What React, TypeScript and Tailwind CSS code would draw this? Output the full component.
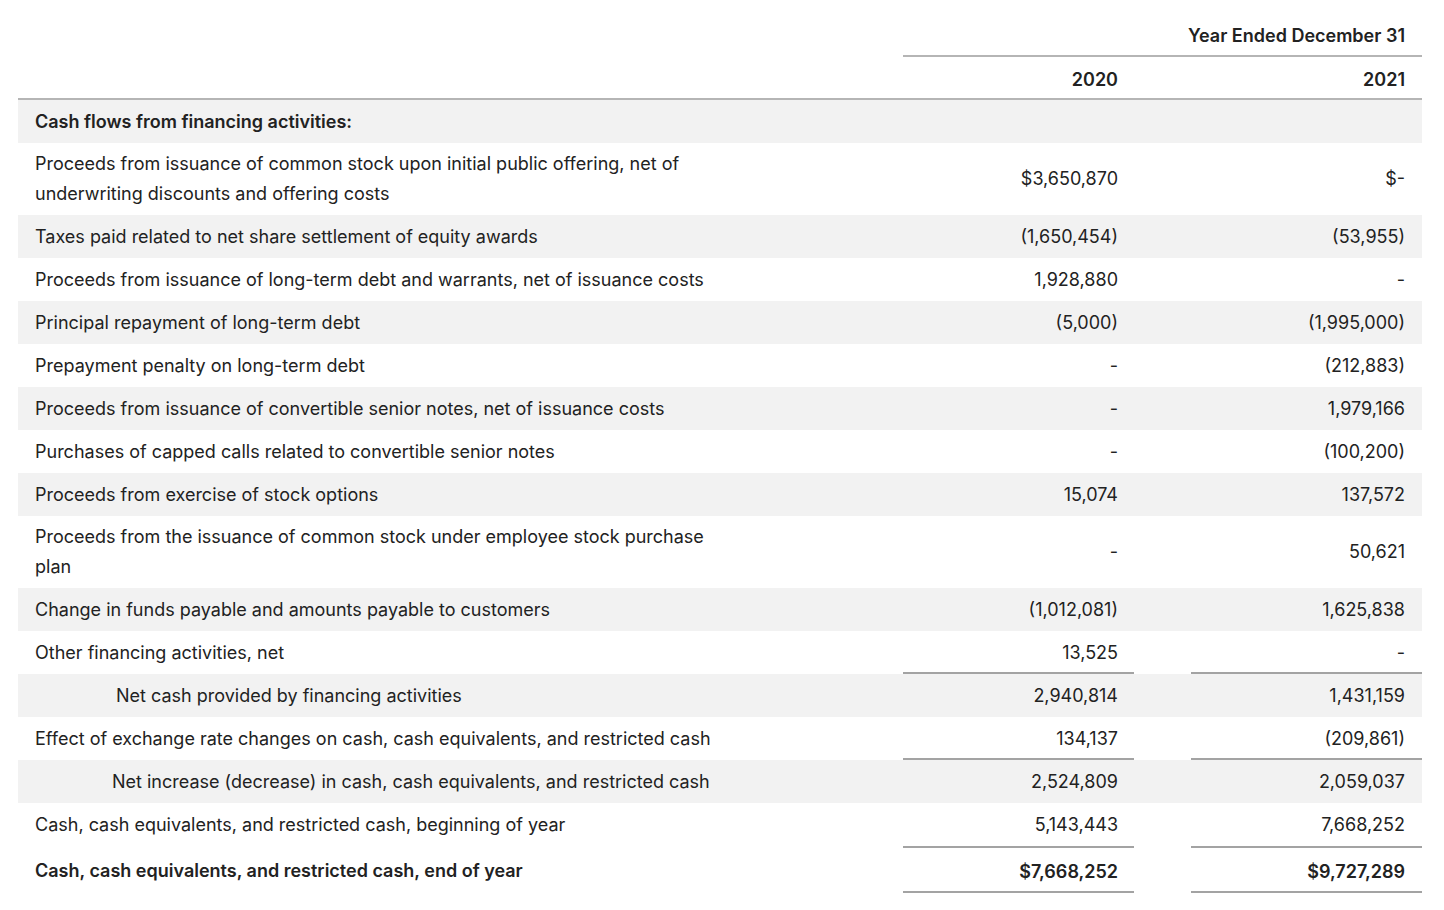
type Row = {
  label: string[];
  a: string;
  b: string;
  bold?: boolean;
  indent?: string;
  lineTop?: boolean;
};

const rows: Row[] = [
  { label: ["Cash flows from financing activities:"], a: "", b: "", bold: true },
  {
    label: [
      "Proceeds from issuance of common stock upon initial public offering, net of",
      "underwriting discounts and offering costs",
    ],
    a: "$3,650,870",
    b: "$-",
  },
  { label: ["Taxes paid related to net share settlement of equity awards"], a: "(1,650,454)", b: "(53,955)" },
  {
    label: ["Proceeds from issuance of long-term debt and warrants, net of issuance costs"],
    a: "1,928,880",
    b: "-",
  },
  { label: ["Principal repayment of long-term debt"], a: "(5,000)", b: "(1,995,000)" },
  { label: ["Prepayment penalty on long-term debt"], a: "-", b: "(212,883)" },
  { label: ["Proceeds from issuance of convertible senior notes, net of issuance costs"], a: "-", b: "1,979,166" },
  { label: ["Purchases of capped calls related to convertible senior notes"], a: "-", b: "(100,200)" },
  { label: ["Proceeds from exercise of stock options"], a: "15,074", b: "137,572" },
  {
    label: ["Proceeds from the issuance of common stock under employee stock purchase", "plan"],
    a: "-",
    b: "50,621",
  },
  { label: ["Change in funds payable and amounts payable to customers"], a: "(1,012,081)", b: "1,625,838" },
  { label: ["Other financing activities, net"], a: "13,525", b: "-" },
  {
    label: ["Net cash provided by financing activities"],
    a: "2,940,814",
    b: "1,431,159",
    indent: "pl-[98px]",
    lineTop: true,
  },
  {
    label: ["Effect of exchange rate changes on cash, cash equivalents, and restricted cash"],
    a: "134,137",
    b: "(209,861)",
  },
  {
    label: ["Net increase (decrease) in cash, cash equivalents, and restricted cash"],
    a: "2,524,809",
    b: "2,059,037",
    indent: "pl-[94px]",
    lineTop: true,
  },
  {
    label: ["Cash, cash equivalents, and restricted cash, beginning of year"],
    a: "5,143,443",
    b: "7,668,252",
  },
];

function BodyRow({ row, shaded }: { row: Row; shaded: boolean }) {
  const line = row.lineTop ? "border-t-2 border-[#a3a3a3]" : "border-t-2 border-transparent";
  return (
    <div
      className={`grid grid-cols-[885px_231px_57px_231px] ${shaded ? "bg-[#f2f2f2]" : "bg-white"}`}
    >
      <div
        className={`flex min-h-[43px] flex-col justify-center py-[6px] ${row.indent ?? "pl-[17px]"} ${
          row.bold ? "font-semibold" : ""
        }`}
      >
        {row.label.map((l) => (
          <span key={l}>{l}</span>
        ))}
      </div>
      <div className={`-mt-[2px] flex items-center justify-end pr-4 ${line}`}>{row.a}</div>
      <div />
      <div className={`-mt-[2px] flex items-center justify-end pr-[17px] ${line}`}>{row.b}</div>
    </div>
  );
}

export default function App() {
  return (
    <div className="min-h-[910px] bg-white pl-[18px] pr-[22px] font-['Inter',sans-serif] text-[18px] leading-[30px] text-[#222222]">
      <div className="w-[1404px]">
        <div className="grid h-[57px] grid-cols-[885px_519px]">
          <div />
          <div className="flex items-end justify-end border-b-2 border-[#b5b5b5] pb-[4px] pr-[17px] font-semibold">
            Year Ended December 31
          </div>
        </div>
        <div className="grid h-[43px] grid-cols-[885px_231px_57px_231px] border-b-2 border-[#b5b5b5] pt-[4px] font-semibold">
          <div />
          <div className="flex items-center justify-end pr-4">2020</div>
          <div />
          <div className="flex items-center justify-end pr-[17px]">2021</div>
        </div>
        {rows.map((r, i) => (
          <BodyRow key={r.label[0]} row={r} shaded={i % 2 === 0} />
        ))}
        <div className="grid grid-cols-[885px_231px_57px_231px] font-semibold">
          <div className="flex h-[47px] items-center pl-[17px] pt-[3px]">
            Cash, cash equivalents, and restricted cash, end of year
          </div>
          <div className="flex items-center justify-end border-y-2 border-[#a3a3a3] pr-4 pt-[4px]">$7,668,252</div>
          <div />
          <div className="flex items-center justify-end border-y-2 border-[#a3a3a3] pr-[17px] pt-[4px]">
            $9,727,289
          </div>
        </div>
      </div>
    </div>
  );
}
